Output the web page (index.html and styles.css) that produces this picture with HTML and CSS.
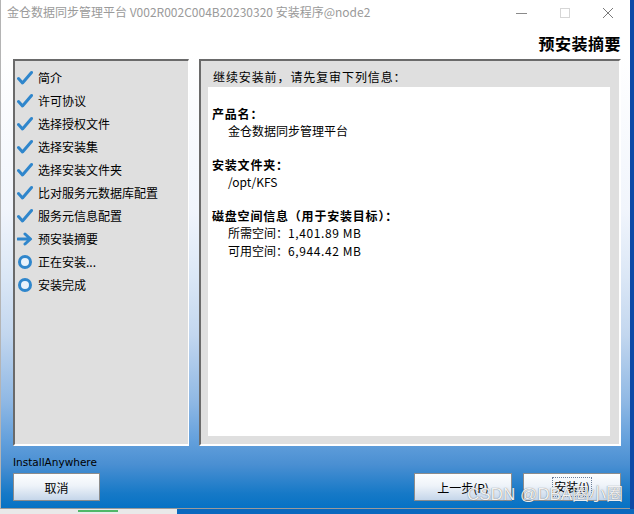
FILE: index.html
```html
<!DOCTYPE html>
<html lang="zh-CN">
<head>
<meta charset="utf-8">
<title>安装程序</title>
<link rel="stylesheet" href="styles.css">
</head>
<body>
<div class="screen">
  <div class="window">
    <div class="titlebar">
      <span class="title">金仓数据同步管理平台 V002R002C004B20230320 安装程序@node2</span>
      <div class="controls">
        <span class="ctl min"><svg width="12" height="12" viewBox="0 0 12 12"><line x1="0" y1="6.5" x2="11" y2="6.5" stroke="#8a8a8a" stroke-width="1"/></svg></span>
        <span class="ctl max"><svg width="12" height="12" viewBox="0 0 12 12"><rect x="1.5" y="1.5" width="9" height="9" fill="none" stroke="#d6d6d6" stroke-width="1"/></svg></span>
        <span class="ctl close"><svg width="12" height="12" viewBox="0 0 12 12"><path d="M1 1 L11 11 M11 1 L1 11" stroke="#7a7a7a" stroke-width="1"/></svg></span>
      </div>
    </div>
    <div class="body">
      <div class="header">预安装摘要</div>
      <div class="main">
        <div class="steps">
          <div class="step"><svg class="ico" viewBox="0 0 16 16"><path d="M1.5 8.5 L5.5 13 L14.5 2.5" fill="none" stroke="#2f86cc" stroke-width="3" stroke-linecap="round" stroke-linejoin="round"/></svg>简介</div>
          <div class="step"><svg class="ico" viewBox="0 0 16 16"><path d="M1.5 8.5 L5.5 13 L14.5 2.5" fill="none" stroke="#2f86cc" stroke-width="3" stroke-linecap="round" stroke-linejoin="round"/></svg>许可协议</div>
          <div class="step"><svg class="ico" viewBox="0 0 16 16"><path d="M1.5 8.5 L5.5 13 L14.5 2.5" fill="none" stroke="#2f86cc" stroke-width="3" stroke-linecap="round" stroke-linejoin="round"/></svg>选择授权文件</div>
          <div class="step"><svg class="ico" viewBox="0 0 16 16"><path d="M1.5 8.5 L5.5 13 L14.5 2.5" fill="none" stroke="#2f86cc" stroke-width="3" stroke-linecap="round" stroke-linejoin="round"/></svg>选择安装集</div>
          <div class="step"><svg class="ico" viewBox="0 0 16 16"><path d="M1.5 8.5 L5.5 13 L14.5 2.5" fill="none" stroke="#2f86cc" stroke-width="3" stroke-linecap="round" stroke-linejoin="round"/></svg>选择安装文件夹</div>
          <div class="step"><svg class="ico" viewBox="0 0 16 16"><path d="M1.5 8.5 L5.5 13 L14.5 2.5" fill="none" stroke="#2f86cc" stroke-width="3" stroke-linecap="round" stroke-linejoin="round"/></svg>比对服务元数据库配置</div>
          <div class="step"><svg class="ico" viewBox="0 0 16 16"><path d="M1.5 8.5 L5.5 13 L14.5 2.5" fill="none" stroke="#2f86cc" stroke-width="3" stroke-linecap="round" stroke-linejoin="round"/></svg>服务元信息配置</div>
          <div class="step"><svg class="ico" viewBox="0 0 16 16"><path d="M1 8 L12 8 M8 3 L13.5 8 L8 13" fill="none" stroke="#2f86cc" stroke-width="3" stroke-linecap="round" stroke-linejoin="round"/></svg>预安装摘要</div>
          <div class="step"><svg class="ico" viewBox="0 0 16 16"><circle cx="8" cy="8" r="5.5" fill="#e8f2fb" stroke="#2f86cc" stroke-width="3"/></svg>正在安装...</div>
          <div class="step"><svg class="ico" viewBox="0 0 16 16"><circle cx="8" cy="8" r="5.5" fill="#e8f2fb" stroke="#2f86cc" stroke-width="3"/></svg>安装完成</div>
        </div>
        <div class="panel">
          <div class="intro">继续安装前，请先复审下列信息：</div>
          <div class="info">
            <div class="group">
              <div class="label">产品名：</div>
              <div class="value">金仓数据同步管理平台</div>
            </div>
            <div class="group">
              <div class="label">安装文件夹：</div>
              <div class="value">/opt/KFS</div>
            </div>
            <div class="group">
              <div class="label">磁盘空间信息（用于安装目标）：</div>
              <div class="value">所需空间：<span class="num">1,401.89 MB</span></div>
              <div class="value">可用空间：<span class="num">6,944.42 MB</span></div>
            </div>
          </div>
        </div>
      </div>
      <div class="brand">InstallAnywhere</div>
      <div class="buttons">
        <button class="btn cancel">取消</button>
        <div class="spacer"></div>
        <button class="btn">上一步(P)</button>
        <button class="btn"><span class="focus">安装(I)</span></button>
      </div>
      <div class="watermark">CSDN @DBA圈小圈</div>
    </div>
  </div>
  <div class="desk">
    <div class="desk-left"><span class="desk-mark"></span></div>
    <div class="desk-right"></div>
  </div>
</div>
</body>
</html>
```
FILE: styles.css
```css
html, body {
  margin: 0;
  padding: 0;
}
body {
  width: 634px;
  height: 514px;
  overflow: hidden;
  background: #0c4aa6;
  font-family: "Noto Sans CJK SC", "Noto Sans", sans-serif;
}
.screen {
  width: 634px;
  height: 514px;
  display: flex;
  flex-direction: column;
}
.window {
  width: 629px;
  height: 508px;
  border-left: 1px solid #b4b4b4;
  border-bottom: 1px solid #9a9a9a;
  display: flex;
  flex-direction: column;
  background: #fff;
  position: relative;
}
.titlebar {
  height: 26px;
  display: flex;
  align-items: center;
  padding-left: 6px;
  background: #fff;
}
.title {
  font-size: 12px;
  color: #9a9a9a;
  line-height: 26px;
  white-space: nowrap;
  margin-top: -2px;
}
.controls {
  margin-left: auto;
  display: flex;
  align-items: center;
  margin-right: 16px;
  gap: 31px;
  margin-top: -1px;
}
.ctl {
  width: 12px;
  height: 12px;
  display: flex;
}
.body {
  flex: 1;
  display: flex;
  flex-direction: column;
  padding: 0 9px 0 12px;
  background: linear-gradient(to bottom, #ffffff 0%, #ffffff 6%, #f1f5fc 38%, #dbe7f6 52%, #c3d7ef 64%, #8fb8e4 78%, #63a0dc 86%, #4a8fd2 91%, #1679c7 97%, #0672c4 100%);
}
.header {
  height: 33px;
  display: flex;
  align-items: center;
  justify-content: flex-end;
  font-size: 16px;
  font-weight: 700;
  color: #000;
  letter-spacing: 0.5px;
}
.main {
  display: flex;
  gap: 10px;
  height: 387px;
}
.steps {
  width: 176px;
  box-sizing: border-box;
  background: #dfdfdf;
  border-top: 2px solid #6a6a6a;
  border-left: 2px solid #6a6a6a;
  border-right: 1px solid #ffffff;
  border-bottom: 2px solid #ffffff;
  padding: 5px 0 0 2px;
  display: flex;
  flex-direction: column;
}
.step {
  height: 23px;
  display: flex;
  align-items: center;
  font-size: 12px;
  color: #000;
  white-space: nowrap;
}
.ico {
  width: 16px;
  height: 16px;
  margin-right: 5px;
  flex: none;
}
.panel {
  flex: 1;
  box-sizing: border-box;
  background: #dfdfdf;
  border-top: 2px solid #6a6a6a;
  border-left: 2px solid #6a6a6a;
  border-right: 2px solid #ffffff;
  border-bottom: 2px solid #ffffff;
  padding: 0 9px 8px 7px;
  display: flex;
  flex-direction: column;
}
.intro {
  height: 26px;
  display: flex;
  align-items: center;
  font-size: 12px;
  letter-spacing: 0.9px;
  padding-left: 5px;
  padding-top: 4px;
  box-sizing: border-box;
  color: #000;
  white-space: nowrap;
}
.info {
  flex: 1;
  background: #fff;
  padding: 18px 0 0 4px;
  display: flex;
  flex-direction: column;
  gap: 16px;
}
.label {
  font-size: 12px;
  font-weight: 700;
  letter-spacing: 0.8px;
  line-height: 17px;
  color: #000;
  white-space: nowrap;
}
.value {
  font-size: 12px;
  line-height: 18px;
  padding-left: 16px;
  color: #000;
  white-space: nowrap;
}
.num {
  letter-spacing: 0.6px;
}
.brand {
  margin-top: 9px;
  font-family: "DejaVu Sans", sans-serif;
  font-size: 10.5px;
  color: #000;
  line-height: 14px;
}
.buttons {
  margin-top: 4px;
  display: flex;
  gap: 11px;
  height: 28px;
}
.spacer {
  flex: 1;
}
.btn {
  width: 98px;
  height: 28px;
  box-sizing: border-box;
  border: 1px solid #8c8c8c;
  background: linear-gradient(to bottom, #fdfeff 0%, #eef3f9 45%, #c5d6ea 100%);
  font-family: "Noto Sans CJK SC", sans-serif;
  font-size: 12px;
  color: #000;
  padding: 0;
  display: flex;
  align-items: center;
  justify-content: center;
}
.btn.cancel {
  width: 87px;
}
.focus {
  border: 1px dotted #6d7f99;
  padding: 0 1px;
  line-height: 18px;
}
.watermark {
  position: absolute;
  left: 466px;
  top: 480px;
  font-family: "Liberation Sans", "Noto Sans CJK SC", sans-serif;
  font-size: 17px;
  color: rgba(255, 255, 255, 0.92);
  text-shadow: 0 0 1px rgba(60, 60, 60, 0.8);
  white-space: nowrap;
}
.desk {
  flex: 1;
  display: flex;
}
.desk-left {
  width: 177px;
  background: #e9e9e9;
  display: flex;
}
.desk-mark {
  width: 40px;
  height: 2px;
  margin-left: 78px;
  margin-top: 1px;
  background: #4fb868;
}
.desk-right {
  flex: 1;
  background: #0a68be;
}
```
